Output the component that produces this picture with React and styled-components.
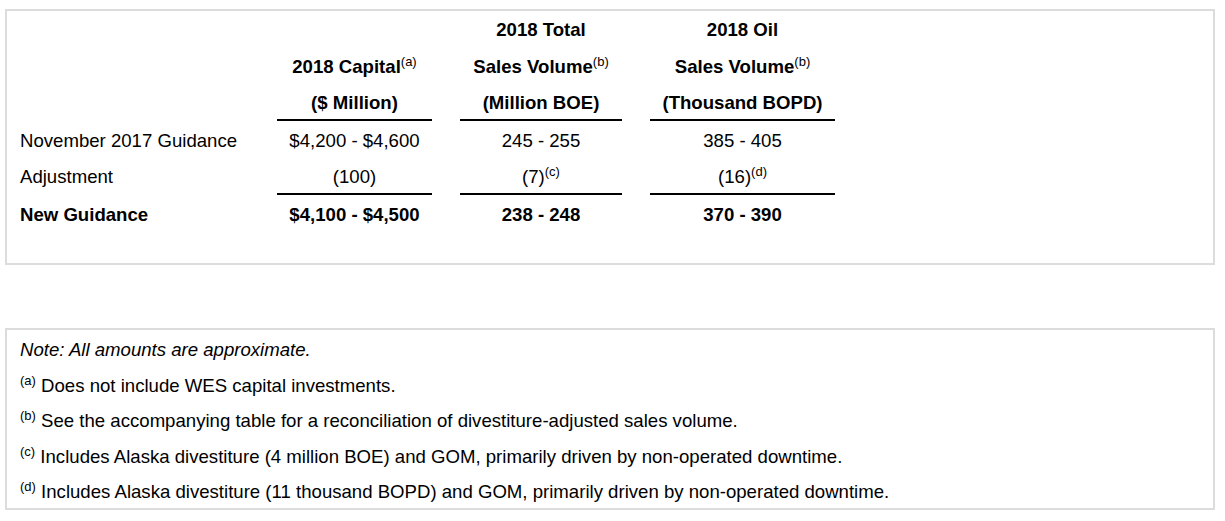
import React from "react";
import styled, { createGlobalStyle } from "styled-components";

const GlobalStyle = createGlobalStyle`
  html, body {
    margin: 0;
    padding: 0;
    background: #fff;
  }
  body {
    font-family: "Liberation Sans", Arial, sans-serif;
    font-size: 18.6px;
    color: #000;
  }
`;

const Page = styled.div`
  padding: 9px 10px 0 5px;
`;

const Box = styled.div`
  border: 2px solid #dcdcdc;
  box-sizing: border-box;
  width: 1210px;
  padding: ${(p) => p.$pad};
  margin-bottom: ${(p) => p.$gap || "0"};
`;

const Grid = styled.div`
  display: grid;
  grid-template-columns: 229px 155px 162px 185px;
  column-gap: 28px;
  margin-left: 13px;
`;

const HeadCell = styled.div`
  display: flex;
  flex-direction: column;
  justify-content: flex-end;
  gap: 4.5px;
  padding-top: 3px;
  font-weight: bold;
  text-align: center;
  border-bottom: ${(p) => (p.$line ? "2px solid #000" : "2px solid transparent")};
`;

const HeadLine = styled.div`
  line-height: 32px;
  height: 32px;
  white-space: nowrap;
`;

const Cell = styled.div`
  padding-top: 4px;
  line-height: 32px;
  height: 32px;
  white-space: nowrap;
  text-align: ${(p) => (p.$left ? "left" : "center")};
  font-weight: ${(p) => (p.$bold ? "bold" : "normal")};
  border-bottom: ${(p) => (p.$line ? "2px solid #000" : "none")};
`;

const Sup = styled.span`
  font-size: 13px;
  font-weight: normal;
  vertical-align: 7px;
  line-height: 0;
`;

const Notes = styled.div`
  display: flex;
  flex-direction: column;
  gap: 3.5px;
  margin-left: 13px;
`;

const Note = styled.div`
  line-height: 32px;
  height: 32px;
  white-space: nowrap;
  font-style: ${(p) => (p.$italic ? "italic" : "normal")};
`;

const rows = [
  { label: "November 2017 Guidance", cap: "$4,200 - $4,600", total: "245 - 255", oil: "385 - 405" },
  {
    label: "Adjustment",
    cap: "(100)",
    total: <>(7)<Sup>(c)</Sup></>,
    oil: <>(16)<Sup>(d)</Sup></>,
    line: true,
  },
  { label: "New Guidance", cap: "$4,100 - $4,500", total: "238 - 248", oil: "370 - 390", bold: true },
];

const notes = [
  ["a", "Does not include WES capital investments."],
  ["b", "See the accompanying table for a reconciliation of divestiture-adjusted sales volume."],
  ["c", "Includes Alaska divestiture (4 million BOE) and GOM, primarily driven by non-operated downtime."],
  ["d", "Includes Alaska divestiture (11 thousand BOPD) and GOM, primarily driven by non-operated downtime."],
];

export default function App() {
  return (
    <>
      <GlobalStyle />
      <Page>
        <Box $pad="0 0 32px 0" $gap="63px">
          <Grid>
            <HeadCell />
            <HeadCell $line>
              <HeadLine>
                2018 Capital<Sup>(a)</Sup>
              </HeadLine>
              <HeadLine>($ Million)</HeadLine>
            </HeadCell>
            <HeadCell $line>
              <HeadLine>2018 Total</HeadLine>
              <HeadLine>
                Sales Volume<Sup>(b)</Sup>
              </HeadLine>
              <HeadLine>(Million BOE)</HeadLine>
            </HeadCell>
            <HeadCell $line>
              <HeadLine>2018 Oil</HeadLine>
              <HeadLine>
                Sales Volume<Sup>(b)</Sup>
              </HeadLine>
              <HeadLine>(Thousand BOPD)</HeadLine>
            </HeadCell>
            {rows.map((r) => (
              <React.Fragment key={r.label}>
                <Cell $left $bold={r.bold}>{r.label}</Cell>
                <Cell $bold={r.bold} $line={r.line}>{r.cap}</Cell>
                <Cell $bold={r.bold} $line={r.line}>{r.total}</Cell>
                <Cell $bold={r.bold} $line={r.line}>{r.oil}</Cell>
              </React.Fragment>
            ))}
          </Grid>
        </Box>
        <Box $pad="4px 0 0 0">
          <Notes>
            <Note $italic>Note: All amounts are approximate.</Note>
            {notes.map(([k, t]) => (
              <Note key={k}>
                <Sup>({k})</Sup> {t}
              </Note>
            ))}
          </Notes>
        </Box>
      </Page>
    </>
  );
}
